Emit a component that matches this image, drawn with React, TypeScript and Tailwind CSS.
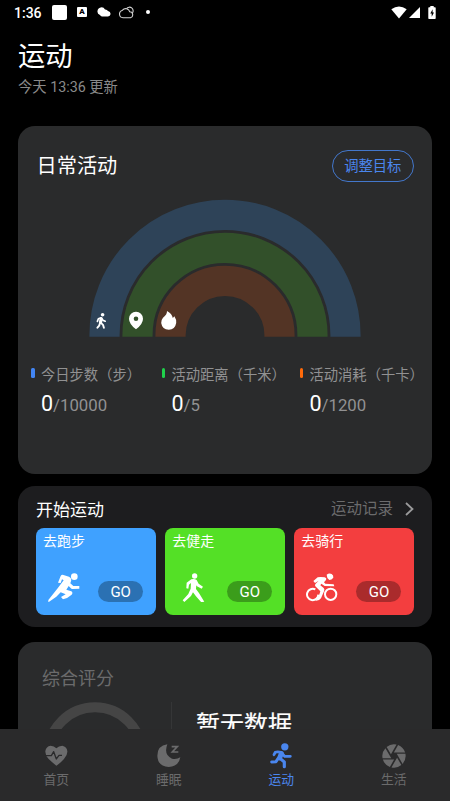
import type { ReactNode } from 'react';
import { MdCamera } from 'react-icons/md';

const stats = [
  { label: '今日步数（步）', value: '0', goal: '/10000', bar: 'bg-[#4285f4]', width: 'w-[130.5px]' },
  { label: '活动距离（千米）', value: '0', goal: '/5', bar: 'bg-[#1fd14b]', width: 'w-[138px]' },
  { label: '活动消耗（千卡）', value: '0', goal: '/1200', bar: 'bg-[#ff6a0a]', width: 'w-[125px]' },
];

const RunnerIcon = () => (
  <svg viewBox="98 262 96 88" className="w-8 h-[29.3px]" fill="currentColor">
    <circle cx="177" cy="273" r="10" />
    <path d="M136 271 Q138 267 142 267 L161 273 Q170 277 167 287 L165 293 L174 301 L192 301 L192 309 L171 310 Q168 310 166 307 L160 301 L153 312 L168 317 Q174 321 169 327 Q158 337 143 341 L137 334 L151 326 L136 320 L123 333 L99 350 L99 343 L127 308 L145 284 L140 281 L136 292 L128 291 Z" />
  </svg>
);

const WalkerIcon = () => (
  <svg viewBox="498 262 70 88" className="w-[23.3px] h-[29.3px]" fill="currentColor">
    <circle cx="536" cy="271" r="8" />
    <path d="M526 281 Q535 278 542 283 L548 294 L561 303 L557 309 L543 302 L541 299 L540 310 L549 322 L565 348 L556 350 L540 332 L531 320 L525 331 L505 349 L500 344 L517 325 L524 309 L525 292 L519 297 L517 309 L511 308 L512 291 Z" />
  </svg>
);

const CyclistIcon = () => (
  <svg viewBox="242 264 96 88" className="w-8 h-[29.3px]" fill="none" stroke="currentColor">
    <path d="M270 313.5 A17 17 0 1 0 279 329" strokeWidth="6" />
    <circle cx="316" cy="328" r="17" strokeWidth="6" />
    <path
      d="M304 269 Q311 264 319 267 Q325 271 324 278 Q319 285 312 285 Q304 279 304 269 Z M264 288 L277 277 Q284 275 298 277 Q305 279 302 285 L296 292 L300 296 L325 298 L327 304 L298 303 L288 296 L285 301 L295 309 Q299 313 296 319 L287 340 Q282 348 270 347 Q280 339 285 319 L270 304 Q267 300 271 296 L280 287 L269 294 Z"
      fill="currentColor"
      stroke="none"
    />
  </svg>
);

const workouts = [
  { title: '去跑步', icon: <RunnerIcon />, bg: 'bg-[#3fa1ff]', pill: 'bg-[#2b71b3]', box: 'left-0' },
  { title: '去健走', icon: <WalkerIcon />, bg: 'bg-[#54e026]', pill: 'bg-[#3b9d1b]', box: 'left-[5px]' },
  { title: '去骑行', icon: <CyclistIcon />, bg: 'bg-[#f33e3f]', pill: 'bg-[#aa2b2c]', box: 'left-0' },
];

const HeartIcon = () => (
  <svg viewBox="134 331 68 64" className="w-[22.7px] h-[21.3px]">
    <path
      d="M168 393 Q162 389 145 373 Q134 362 135 349 Q137 335 151 333 Q161 333 168 341 Q175 333 186 333 Q199 336 201 349 Q202 361 191 373 Q176 389 168 393 Z"
      fill="currentColor"
    />
    <path d="M134 363 H153 L160 351 L168 373 L176 362 H185" fill="none" stroke="#2a2a2b" strokeWidth="4" strokeLinejoin="round" />
  </svg>
);

const SleepIcon = () => (
  <svg viewBox="470 330 71 70" className="w-[23.7px] h-[23.3px]">
    <path
      d="M501 331 Q471 335 471 365 Q472 397 505 399 Q535 398 540 370 Q529 377 515 374 Q489 363 501 331 Z"
      fill="currentColor"
    />
    <path d="M514 338 H531 L516 354 H534" fill="none" stroke="currentColor" strokeWidth="5" />
  </svg>
);

const SportIcon = () => (
  <svg viewBox="134 327 67 76" className="w-[22.3px] h-[25.3px]" fill="none" stroke="currentColor" strokeLinecap="round" strokeLinejoin="round">
    <circle cx="178.5" cy="338.5" r="11" fill="currentColor" stroke="none" />
    <path d="M146 362 L150 355 Q156 352 168 355 L178 367 L195 367" strokeWidth="8.5" />
    <path d="M168 359 L163 372" strokeWidth="15" />
    <path d="M158 374 L152 383 L139 384" strokeWidth="9" />
    <path d="M165 374 L177 384 L177 398" strokeWidth="9.5" />
  </svg>
);

const tabs = [
  { label: '首页', icon: <HeartIcon />, color: 'text-[#6b6b6c]' },
  { label: '睡眠', icon: <SleepIcon />, color: 'text-[#6b6b6c]' },
  { label: '运动', icon: <SportIcon />, color: 'text-[#4a86ee]' },
  { label: '生活', icon: <MdCamera className="w-7 h-7" />, color: 'text-[#6b6b6c]' },
];

function StatusBar() {
  return (
    <div className="flex h-6 shrink-0 items-center pl-[14px] pr-[14px]">
      <span className="w-[38px] pt-[2px] text-[14px] leading-6 font-medium">1:36</span>
      <div className="h-[15px] w-[15px] rounded-[2px] bg-white" />
      <div className="ml-[10px] flex h-[10px] w-[10px] items-center justify-center rounded-[1px] bg-white text-[8px] leading-none font-black text-black">
        A
      </div>
      <svg viewBox="0 0 14 10" className="ml-[9.5px] h-[10px] w-[14px]" fill="currentColor">
        <path d="M3 8 A3.6 3.6 0 0 1 0.5 4 A4 4 0 0 1 8 2.4 Q10 2.2 11 4.1 Q13.6 4.5 13.6 7 Q13.2 9.4 11 9.4 H5 Q3.6 9.4 3 8 Z" />
      </svg>
      <svg viewBox="0 0 16 14" className="ml-2 h-[14px] w-4" fill="none" stroke="#d4d4d4" strokeWidth="1.1">
        <path d="M4 12.7 A3.8 3.8 0 0 1 3.5 5.2 A4.2 4.2 0 0 1 10.8 6.8 A3 3 0 0 1 11.5 12.7 Z" />
        <path d="M7.6 3.6 A3.6 3.6 0 1 1 13.4 8" />
      </svg>
      <div className="ml-[11px] h-1 w-1 rounded-full bg-white" />
      <div className="ml-auto flex items-center">
        <svg viewBox="0 0 16 13" className="h-[13px] w-4" fill="currentColor">
          <path d="M0.3 3.2 Q8 -2.2 15.7 3.2 L8 12.6 Z" />
        </svg>
        <svg viewBox="0 0 11 11" className="ml-[2.5px] mt-[1px] h-[11px] w-[11px]" fill="currentColor">
          <path d="M11 0 V11 H0 Z" />
        </svg>
        <svg viewBox="0 0 8 13" className="ml-2 h-[13px] w-2" fill="currentColor">
          <path d="M2.3 0 H5.7 V1.3 H7 Q7.7 1.3 7.7 2 V12.3 Q7.7 13 7 13 H1 Q0.3 13 0.3 12.3 V2 Q0.3 1.3 1 1.3 H2.3 Z" />
          <path d="M4.6 3.3 L2.3 7.4 H3.7 V10.8 L6 6.6 H4.6 Z" fill="#000" />
        </svg>
      </div>
    </div>
  );
}

function ActivityRings() {
  return (
    <svg viewBox="80 195 290 145" className="mx-auto h-[145px] w-[290px] shrink-0">
      <g fill="none" strokeWidth="30.2">
        <path d="M104.5 336.8 V335.3 A120.5 120.5 0 0 1 345.5 335.3 V336.8" stroke="#2e4358" />
        <path d="M137.5 336.8 V335.3 A87.5 87.5 0 0 1 312.5 335.3 V336.8" stroke="#32502a" />
        <path d="M170.5 336.8 V335.3 A54.5 54.5 0 0 1 279.5 335.3 V336.8" stroke="#533425" />
      </g>
      {/* steps walker */}
      <g stroke="#fff" fill="none" strokeLinecap="round" strokeLinejoin="round">
        <circle cx="102.6" cy="314.8" r="1.8" fill="#fff" stroke="none" />
        <path d="M97.4 321.4 L98.4 318.8 L101 317.8 L103 320.2 L105.2 321.2" strokeWidth="1.7" />
        <path d="M101.2 318.8 L100.5 322.4" strokeWidth="3.2" />
        <path d="M100 323 L99.2 325.6 L97.4 327.7" strokeWidth="1.9" />
        <path d="M101 322.8 L103 324.8 L103.9 327.8" strokeWidth="1.9" />
      </g>
      {/* distance pin */}
      <path
        d="M136 329.3 Q129 324 129 318.7 A7 7 0 0 1 143 318.7 Q143 324 136 329.3 Z M136 316.5 A2.3 2.3 0 1 0 136 321.1 A2.3 2.3 0 1 0 136 316.5 Z"
        fill="#fff"
        fillRule="evenodd"
      />
      {/* calories flame */}
      <path
        d="M167 311 Q172 313.5 172.8 318 L174.4 316.2 Q176.6 319.5 176.2 323 Q175 329.7 168.8 329.8 Q162.2 329.6 161.2 323 Q161 320 163 317.7 Q167.2 314.5 167 311 Z"
        fill="#fff"
      />
    </svg>
  );
}

function Card({ className, children }: { className: string; children: ReactNode }) {
  return <section className={`mx-[18px] shrink-0 rounded-[17px] ${className}`}>{children}</section>;
}

export default function App() {
  return (
    <div className="flex h-[801px] w-[450px] flex-col overflow-hidden bg-black font-[Roboto,'Noto_Sans_CJK_SC',sans-serif] text-white">
      <StatusBar />

      <main className="flex min-h-0 flex-1 flex-col overflow-hidden">
        <header className="h-[102px] shrink-0 pl-[18px] pt-[15px]">
          <h1 className="text-[27.3px] leading-9">运动</h1>
          <p className="mt-[2px] text-[14.3px] leading-5 text-[#8a8a8a]">今天 13:36 更新</p>
        </header>

        <Card className="flex h-[347.5px] flex-col bg-[#2a2b2c]">
          <div className="flex h-14 items-start justify-between pl-[18.5px] pr-[18px] pt-6">
            <h2 className="pt-px text-[20.2px] leading-[30px]">日常活动</h2>
            <button className="h-8 w-[82.5px] rounded-full border border-[#4377cb] text-[14.3px] leading-[31px] text-[#4a86ee]">
              调整目标
            </button>
          </div>
          <div className="flex pt-[13px]">
            <ActivityRings />
          </div>
          <div className="flex pl-[13px] pt-6">
            {stats.map((s) => (
              <div key={s.label} className={`flex shrink-0 ${s.width}`}>
                <span className={`mt-1 mr-[6.3px] h-[10px] w-[3.7px] shrink-0 rounded-[1.5px] ${s.bar}`} />
                <div className="whitespace-nowrap">
                  <p className="text-[14.3px] leading-[22px] text-[#919192]">{s.label}</p>
                  <p className="mt-[3px] leading-[30px] text-[#919192]">
                    <span className="text-[21.5px] text-white">{s.value}</span>
                    <span className="text-[16.8px]">{s.goal}</span>
                  </p>
                </div>
              </div>
            ))}
          </div>
        </Card>

        <Card className="mt-3 h-[141.5px] bg-[#1d1d1f] px-[18px] pt-3">
          <div className="flex h-[30.5px] items-start justify-between">
            <h2 className="text-[17px] leading-6">开始运动</h2>
            <div className="flex items-center text-[15.5px] leading-[23px] text-[#6b6b6c]">
              运动记录
              <svg viewBox="0 0 9 14" className="ml-3 h-[14px] w-[9px]" fill="none" stroke="#9a9a9b" strokeWidth="1.8">
                <path d="M1 1 L7.5 7 L1 13" />
              </svg>
            </div>
          </div>
          <div className="grid grid-cols-3 gap-[9.5px]">
            {workouts.map((w) => (
              <div key={w.title} className={`flex h-[86.5px] flex-col justify-between rounded-lg pl-[7px] pr-[12.5px] pb-[12.5px] pt-[3px] ${w.bg}`}>
                <h3 className="text-[14px] leading-5">{w.title}</h3>
                <div className="flex items-end justify-between pl-[5px]">
                  <span className={`relative ${w.box}`}>{w.icon}</span>
                  <span className={`h-[21px] w-[45px] rounded-full text-center text-[15px] leading-[22px] ${w.pill}`}>GO</span>
                </div>
              </div>
            ))}
          </div>
        </Card>

        <Card className="mt-[14.5px] h-[180px] bg-[#2a2b2c] pl-6 pt-6">
          <h2 className="text-[18px] leading-[26px] text-[#6b6b6c]">综合评分</h2>
          <div className="flex pt-[10px]">
            <svg viewBox="0 0 104 104" className="ml-[1px] h-[104px] w-[104px]" fill="none">
              <circle cx="52" cy="52" r="46.7" stroke="#454545" strokeWidth="10" />
            </svg>
            <div className="ml-[24px] h-20 w-px bg-[#353637]" />
            <p className="ml-6 mt-[5px] text-[24px] leading-9 [-webkit-text-stroke:0.2px_white]">暂无数据</p>
          </div>
        </Card>
      </main>

      <nav className="grid h-[72px] shrink-0 grid-cols-4 bg-[#2a2a2b]">
        {tabs.map((t) => (
          <div key={t.label} className={`flex flex-col items-center pt-[13px] ${t.color}`}>
            <span className="flex h-7 items-center">{t.icon}</span>
            <span className="mt-px text-[12.8px] leading-[18px]">{t.label}</span>
          </div>
        ))}
      </nav>
    </div>
  );
}
